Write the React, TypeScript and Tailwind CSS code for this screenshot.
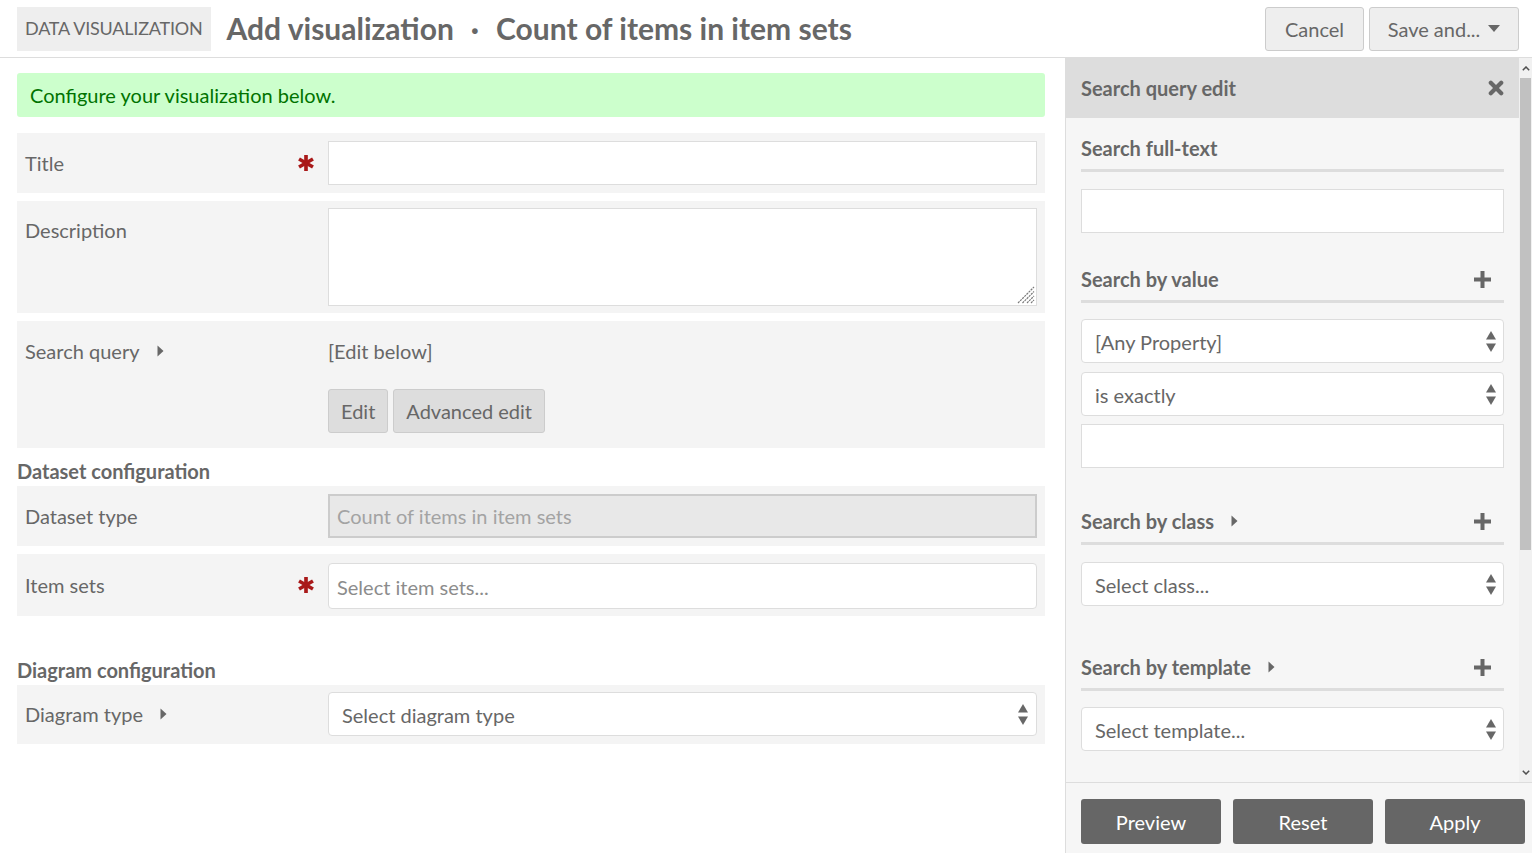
import React from "react";

function Caret() {
  return (
    <svg width="7" height="12" viewBox="0 0 7 12" className="shrink-0">
      <path d="M0.5 0.5 L6.5 6 L0.5 11.5 Z" fill="#676767" />
    </svg>
  );
}

function Arrows() {
  return (
    <svg width="10" height="21" viewBox="0 0 10 21">
      <path d="M5 0 L10 8.5 L0 8.5 Z" fill="#676767" />
      <path d="M0 12.5 L10 12.5 L5 21 Z" fill="#676767" />
    </svg>
  );
}

function Asterisk() {
  return (
    <svg width="16" height="16" viewBox="0 0 14 14" className="shrink-0">
      <g stroke="#a91919" strokeWidth="3.2">
        <line x1="7" y1="0" x2="7" y2="14" />
        <line x1="0.9" y1="3.5" x2="13.1" y2="10.5" />
        <line x1="0.9" y1="10.5" x2="13.1" y2="3.5" />
      </g>
    </svg>
  );
}

function Plus() {
  return (
    <svg width="17" height="17" viewBox="0 0 17 17">
      <path d="M6.5 0 H10.5 V6.5 H17 V10.5 H10.5 V17 H6.5 V10.5 H0 V6.5 H6.5 Z" fill="#676767" />
    </svg>
  );
}

function Close() {
  return (
    <svg width="16" height="16" viewBox="0 0 16 16">
      <g stroke="#676767" strokeWidth="4.2" strokeLinecap="round">
        <line x1="2.8" y1="2.8" x2="13.2" y2="13.2" />
        <line x1="13.2" y1="2.8" x2="2.8" y2="13.2" />
      </g>
    </svg>
  );
}

function Row({
  label,
  required,
  caret,
  className,
  children,
}: {
  label: string;
  required?: boolean;
  caret?: boolean;
  className?: string;
  children: React.ReactNode;
}) {
  return (
    <div className={"flex bg-[#f4f4f4] px-2 " + (className ?? "")}>
      <div className="flex h-[44px] w-[303px] shrink-0 items-center justify-between pr-[14px]">
        <span className="flex items-center gap-[17px] text-[20px]">
          {label}
          {caret && <Caret />}
        </span>
        {required && <Asterisk />}
      </div>
      <div className="min-w-0 flex-1">{children}</div>
    </div>
  );
}

function SideSelect({ text, className }: { text: string; className?: string }) {
  return (
    <div
      className={
        "flex h-[44px] items-center justify-between rounded-[4px] border border-[#ddd] bg-white pl-[13px] pr-[7px] text-[20px] " +
        (className ?? "")
      }
    >
      <span className="pt-[2px]">{text}</span>
      <Arrows />
    </div>
  );
}

function SideHeading({ title, caret, plus, className }: { title: string; caret?: boolean; plus?: boolean; className?: string }) {
  return (
    <div
      className={
        "flex items-center justify-between border-b-[3px] border-[#ddd] pb-2 " + (className ?? "")
      }
    >
      <span className="flex h-[26px] items-center gap-[17px] text-[20px] font-bold">
        {title}
        {caret && <Caret />}
      </span>
      {plus && (
        <span className="mr-[13px]">
          <Plus />
        </span>
      )}
    </div>
  );
}

export default function App() {
  return (
    <div className="flex h-[853px] flex-col overflow-hidden bg-white text-[#676767] [font-family:Lato,'Open_Sans',sans-serif]">
      {/* Header */}
      <header className="flex h-[58px] shrink-0 items-center border-b border-[#ddd] pl-[17px] pr-[13px]">
        <div className="flex h-[44px] items-center bg-[#eee] px-[8px] text-[18px] uppercase tracking-[-0.2px]">
          Data Visualization
        </div>
        <h1 className="ml-4 flex items-center text-[30px] font-bold">
          <span>Add visualization</span>
          <span className="mx-[17px]">·</span>
          <span>Count of items in item sets</span>
        </h1>
        <div className="ml-auto flex gap-[5px]">
          <button className="h-[44px] w-[99px] rounded-[3px] border border-[#ccc] bg-[#eee] text-[20px]">Cancel</button>
          <button className="flex h-[44px] w-[150px] items-center justify-center gap-[8px] rounded-[3px] border border-[#ccc] bg-[#eee] text-[20px]">
            Save and...
            <svg width="12" height="7" viewBox="0 0 12 7">
              <path d="M0 0 H12 L6 7 Z" fill="#676767" />
            </svg>
          </button>
        </div>
      </header>

      <div className="flex min-h-0 flex-1">
        {/* Main form */}
        <main className="min-w-0 flex-1 pl-[17px] pr-[20px] pt-[15px]">
          <div className="flex h-[44px] items-center rounded-[3px] bg-[#ccffcc] px-[13px] text-[20px] text-[#007300]">
            Configure your visualization below.
          </div>

          <Row label="Title" required className="mt-4 py-2">
            <input className="h-[44px] w-full border border-[#ddd] bg-white px-2 outline-none" />
          </Row>

          <Row label="Description" className="mt-2 py-[7px]">
            <div className="relative">
              <textarea className="block h-[98px] w-full resize-none border border-[#ddd] bg-white px-2 outline-none" />
              <svg
                width="18"
                height="18"
                viewBox="0 0 18 18"
                className="pointer-events-none absolute bottom-[2px] right-[2px]"
              >
                <g stroke="#7a7a7a" strokeWidth="1.2" strokeDasharray="2.2 0.8">
                  <line x1="1" y1="17" x2="17" y2="1" />
                  <line x1="5.5" y1="17" x2="17" y2="5.5" />
                  <line x1="10" y1="17" x2="17" y2="10" />
                  <line x1="14" y1="17" x2="17" y2="14" />
                </g>
              </svg>
            </div>
          </Row>

          <Row label="Search query" caret className="mt-2 pb-[15px] pt-2">
            <div className="flex h-[44px] items-center text-[20px]">[Edit below]</div>
            <div className="mt-4 flex gap-[5px]">
              <button className="h-[44px] rounded-[3px] border border-[#ccc] bg-[#ddd] px-3 text-[20px]">Edit</button>
              <button className="h-[44px] rounded-[3px] border border-[#ccc] bg-[#ddd] px-3 text-[20px]">Advanced edit</button>
            </div>
          </Row>

          <h3 className="mt-[9px] flex h-[28px] items-center text-[20px] font-bold">Dataset configuration</h3>

          <Row label="Dataset type" className="mt-px py-2">
            <div className="flex h-[44px] items-center border-2 border-[#ccc] bg-[#e8e8e8] px-[7px] text-[20px] text-[#a3a3a3]">
              Count of items in item sets
            </div>
          </Row>

          <Row label="Item sets" required className="mt-2 pb-[7px] pt-[9px]">
            <div className="flex h-[46px] items-center rounded-[4px] border border-[#ddd] bg-white px-2 pt-[2px] text-[20px] text-[#8c8c8c]">
              Select item sets...
            </div>
          </Row>

          <h3 className="mt-[40px] flex h-[28px] items-center text-[20px] font-bold">Diagram configuration</h3>

          <Row label="Diagram type" caret className="mt-px pb-2 pt-[7px]">
            <div className="flex h-[44px] items-center justify-between rounded-[4px] border border-[#ddd] bg-white pl-[13px] pr-[8px] text-[20px]">
              <span className="pt-[2px]">Select diagram type</span>
              <Arrows />
            </div>
          </Row>
        </main>

        {/* Sidebar */}
        <aside className="flex w-[467px] shrink-0 flex-col border-l border-[#ddd] bg-[#f6f6f6]">
          <div className="flex h-[724px] shrink-0">
            <div className="min-w-0 flex-1 overflow-hidden">
              <div className="flex h-[60px] items-center justify-between bg-[#ddd] px-[15px]">
                <span className="text-[20px] font-bold">Search query edit</span>
                <Close />
              </div>
              <div className="px-[15px] pb-[77px]">
                <SideHeading title="Search full-text" className="mt-[17px]" />
                <input className="mt-[17px] block h-[44px] w-full border border-[#ddd] bg-white px-2 outline-none" />

                <SideHeading title="Search by value" plus className="mt-[33px]" />
                <SideSelect text="[Any Property]" className="mt-4" />
                <SideSelect text="is exactly" className="mt-[9px]" />
                <input className="mt-2 block h-[44px] w-full border border-[#ddd] bg-white px-2 outline-none" />

                <SideHeading title="Search by class" caret plus className="mt-[40px]" />
                <SideSelect text="Select class..." className="mt-[17px]" />

                <SideHeading title="Search by template" caret plus className="mt-[48px]" />
                <SideSelect text="Select template..." className="mt-4" />

                <SideHeading title="Search by item set" caret plus className="mt-[48px]" />
                <SideSelect text="Select item set..." className="mt-4" />

                <SideHeading title="Search by owner" className="mt-[48px]" />
                <SideSelect text="Select owner..." className="mt-4" />
              </div>
            </div>
            {/* scrollbar */}
            <div className="flex w-[13px] shrink-0 flex-col bg-[#f1f1f1]">
              <div className="flex h-[20px] items-center justify-center">
                <svg width="8" height="5" viewBox="0 0 8 5">
                  <path d="M0.8 4.3 L4 1 L7.2 4.3" fill="none" stroke="#505050" strokeWidth="1.5" />
                </svg>
              </div>
              <div className="mx-[1px] h-[472px] bg-[#c1c1c1]" />
              <div className="flex-1" />
              <div className="flex h-[20px] items-center justify-center">
                <svg width="8" height="5" viewBox="0 0 8 5">
                  <path d="M0.8 0.7 L4 4 L7.2 0.7" fill="none" stroke="#505050" strokeWidth="1.5" />
                </svg>
              </div>
            </div>
          </div>
          <div className="flex flex-1 gap-3 border-t border-[#ddd] pl-[15px] pt-4">
            <button className="h-[45px] w-[140px] shrink-0 rounded-[3px] bg-[#666] text-[20px] text-white">Preview</button>
            <button className="h-[45px] w-[140px] shrink-0 rounded-[3px] bg-[#666] text-[20px] text-white">Reset</button>
            <button className="h-[45px] w-[140px] shrink-0 rounded-[3px] bg-[#666] text-[20px] text-white">Apply</button>
          </div>
        </aside>
      </div>
    </div>
  );
}
